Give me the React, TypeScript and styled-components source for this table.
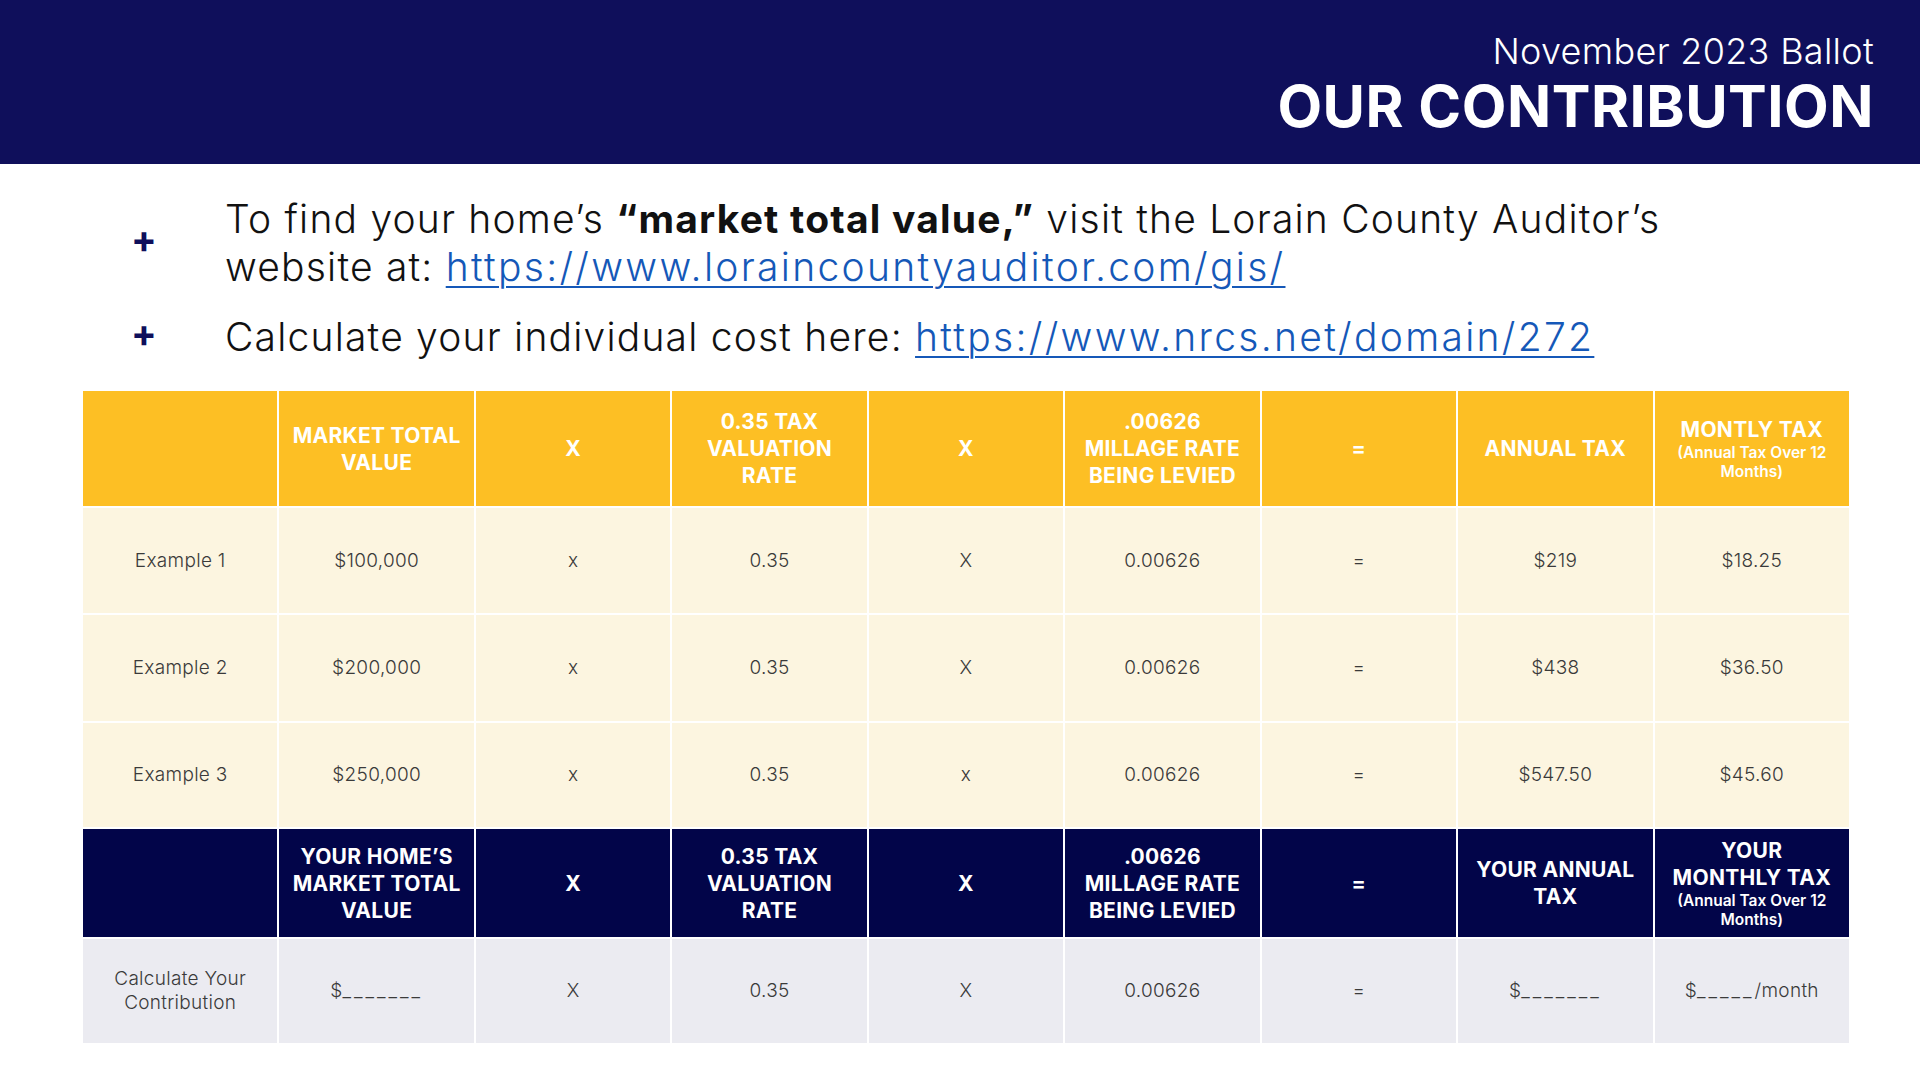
import styled, { createGlobalStyle } from "styled-components";

const GlobalStyle = createGlobalStyle`
  html, body {
    margin: 0;
    padding: 0;
    background: #ffffff;
  }
  body {
    font-family: Inter, "Open Sans", sans-serif;
  }
`;

type Tone = "gold" | "cream" | "navy" | "mist";

interface HeadData {
  lines: string[];
  sub?: string[];
}

const goldHead: HeadData[] = [
  { lines: [] },
  { lines: ["MARKET TOTAL", "VALUE"] },
  { lines: ["X"] },
  { lines: ["0.35 TAX", "VALUATION", "RATE"] },
  { lines: ["X"] },
  { lines: [".00626", "MILLAGE RATE", "BEING LEVIED"] },
  { lines: ["="] },
  { lines: ["ANNUAL TAX"] },
  { lines: ["MONTLY TAX"], sub: ["(Annual Tax Over 12", "Months)"] },
];

const navyHead: HeadData[] = [
  { lines: [] },
  { lines: ["YOUR HOME’S", "MARKET TOTAL", "VALUE"] },
  { lines: ["X"] },
  { lines: ["0.35 TAX", "VALUATION", "RATE"] },
  { lines: ["X"] },
  { lines: [".00626", "MILLAGE RATE", "BEING LEVIED"] },
  { lines: ["="] },
  { lines: ["YOUR ANNUAL", "TAX"] },
  { lines: ["YOUR", "MONTHLY TAX"], sub: ["(Annual Tax Over 12", "Months)"] },
];

const examples: string[][] = [
  ["Example 1", "$100,000", "x", "0.35", "X", "0.00626", "=", "$219", "$18.25"],
  ["Example 2", "$200,000", "x", "0.35", "X", "0.00626", "=", "$438", "$36.50"],
  ["Example 3", "$250,000", "x", "0.35", "x", "0.00626", "=", "$547.50", "$45.60"],
];

const exampleHeights = [105, 106, 104];

const HeadCell = ({ data, tone, height }: { data: HeadData; tone: Tone; height: number }) => (
  <Cell $tone={tone} $height={height}>
    <HeadText>
      {data.lines.map((l, i) => (
        <div key={i}>{l}</div>
      ))}
    </HeadText>
    {data.sub && (
      <SubText>
        {data.sub.map((l, i) => (
          <div key={i}>{l}</div>
        ))}
      </SubText>
    )}
  </Cell>
);

export default function App() {
  return (
    <>
      <GlobalStyle />
      <Page>
        <Banner>
          <Kicker>November 2023 Ballot</Kicker>
          <Heading>OUR CONTRIBUTION</Heading>
        </Banner>

        <Bullets>
          <Bullet>
            <Plus>+</Plus>
            <BulletText>
              To find your home’s <strong>“market total value,”</strong> visit the Lorain County
              Auditor’s website at:{" "}
              <Link href="#">https://www.loraincountyauditor.com/gis/</Link>
            </BulletText>
          </Bullet>
          <Bullet>
            <Plus>+</Plus>
            <BulletText>
              Calculate your individual cost here:{" "}
              <Link href="#">https://www.nrcs.net/domain/272</Link>
            </BulletText>
          </Bullet>
        </Bullets>

        <Table>
          {goldHead.map((c, i) => (
            <HeadCell key={`g${i}`} data={c} tone="gold" height={115} />
          ))}
          {examples.map((row, r) =>
            row.map((v, i) => (
              <Cell key={`e${r}-${i}`} $tone="cream" $height={exampleHeights[r]}>
                <BodyText>{v}</BodyText>
              </Cell>
            ))
          )}
          {navyHead.map((c, i) => (
            <HeadCell key={`n${i}`} data={c} tone="navy" height={108} />
          ))}
          <Cell $tone="mist" $height={104}>
            <BodyText>
              Calculate Your
              <br />
              Contribution
            </BodyText>
          </Cell>
          <Cell $tone="mist" $height={104}>
            <BodyText>
              $<Blank>_______</Blank>
            </BodyText>
          </Cell>
          {["X", "0.35", "X", "0.00626", "="].map((v, i) => (
            <Cell key={`y${i}`} $tone="mist" $height={104}>
              <BodyText>{v}</BodyText>
            </Cell>
          ))}
          <Cell $tone="mist" $height={104}>
            <BodyText>
              $<Blank>_______</Blank>
            </BodyText>
          </Cell>
          <Cell $tone="mist" $height={104}>
            <BodyText>
              $<Blank>_____</Blank>/month
            </BodyText>
          </Cell>
        </Table>
      </Page>
    </>
  );
}

const Page = styled.div`
  width: 1920px;
  height: 1080px;
  overflow: hidden;
  display: flex;
  flex-direction: column;
`;

const Banner = styled.header`
  height: 164px;
  box-sizing: border-box;
  background: #0f0f5b;
  display: flex;
  flex-direction: column;
  align-items: flex-end;
  justify-content: center;
  padding: 6px 46px 0 0;
  color: #ffffff;
`;

const Kicker = styled.div`
  font-size: 36px;
  font-weight: 300;
  line-height: 42px;
  letter-spacing: 0.3px;
`;

const Heading = styled.h1`
  margin: 0;
  font-size: 58px;
  font-weight: 700;
  line-height: 68px;
  letter-spacing: 0.5px;
`;

const Bullets = styled.div`
  display: flex;
  flex-direction: column;
  gap: 22px;
  padding: 31px 0 0 131px;
  height: 227px;
  box-sizing: border-box;
`;

const Bullet = styled.div`
  display: flex;
  align-items: center;
`;

const Plus = styled.span`
  width: 94px;
  flex: none;
  color: #0f0f5b;
  font-size: 38px;
  font-weight: 700;
  line-height: 48px;
  margin-top: -8px;
`;

const BulletText = styled.p`
  margin: 0;
  width: 1500px;
  font-size: 39px;
  font-weight: 300;
  line-height: 48px;
  color: #111111;
  letter-spacing: 1.2px;

  strong {
    font-weight: 700;
    letter-spacing: 1.2px;
  }
`;

const Link = styled.a`
  color: #1558b8;
  letter-spacing: 2.3px;
  text-decoration: underline;
  text-underline-offset: 5px;
  text-decoration-thickness: 2px;
`;

const Table = styled.div`
  margin-left: 83px;
  width: 1766px;
  display: grid;
  grid-template-columns: repeat(9, 1fr);
  gap: 2px;
  background: #ffffff;
`;

const toneBg: Record<Tone, string> = {
  gold: "#fdbf24",
  cream: "#fcf5e0",
  navy: "#020549",
  mist: "#ebebf1",
};

const Cell = styled.div<{ $tone: Tone; $height: number }>`
  height: ${(p) => p.$height}px;
  background: ${(p) => toneBg[p.$tone]};
  color: ${(p) => (p.$tone === "gold" || p.$tone === "navy" ? "#ffffff" : "#3a3a3a")};
  display: flex;
  flex-direction: column;
  align-items: center;
  justify-content: center;
  text-align: center;
  padding: 0 8px;
  box-sizing: border-box;
`;

const HeadText = styled.div`
  font-size: 21px;
  font-weight: 700;
  line-height: 27px;
  letter-spacing: 0.3px;
  white-space: nowrap;
`;

const SubText = styled.div`
  font-size: 15.5px;
  font-weight: 600;
  line-height: 19px;
  white-space: nowrap;
`;

const BodyText = styled.div`
  font-size: 19px;
  font-weight: 300;
  line-height: 24px;
  letter-spacing: 0.3px;
`;

const Blank = styled.span`
  letter-spacing: 3px;
`;
